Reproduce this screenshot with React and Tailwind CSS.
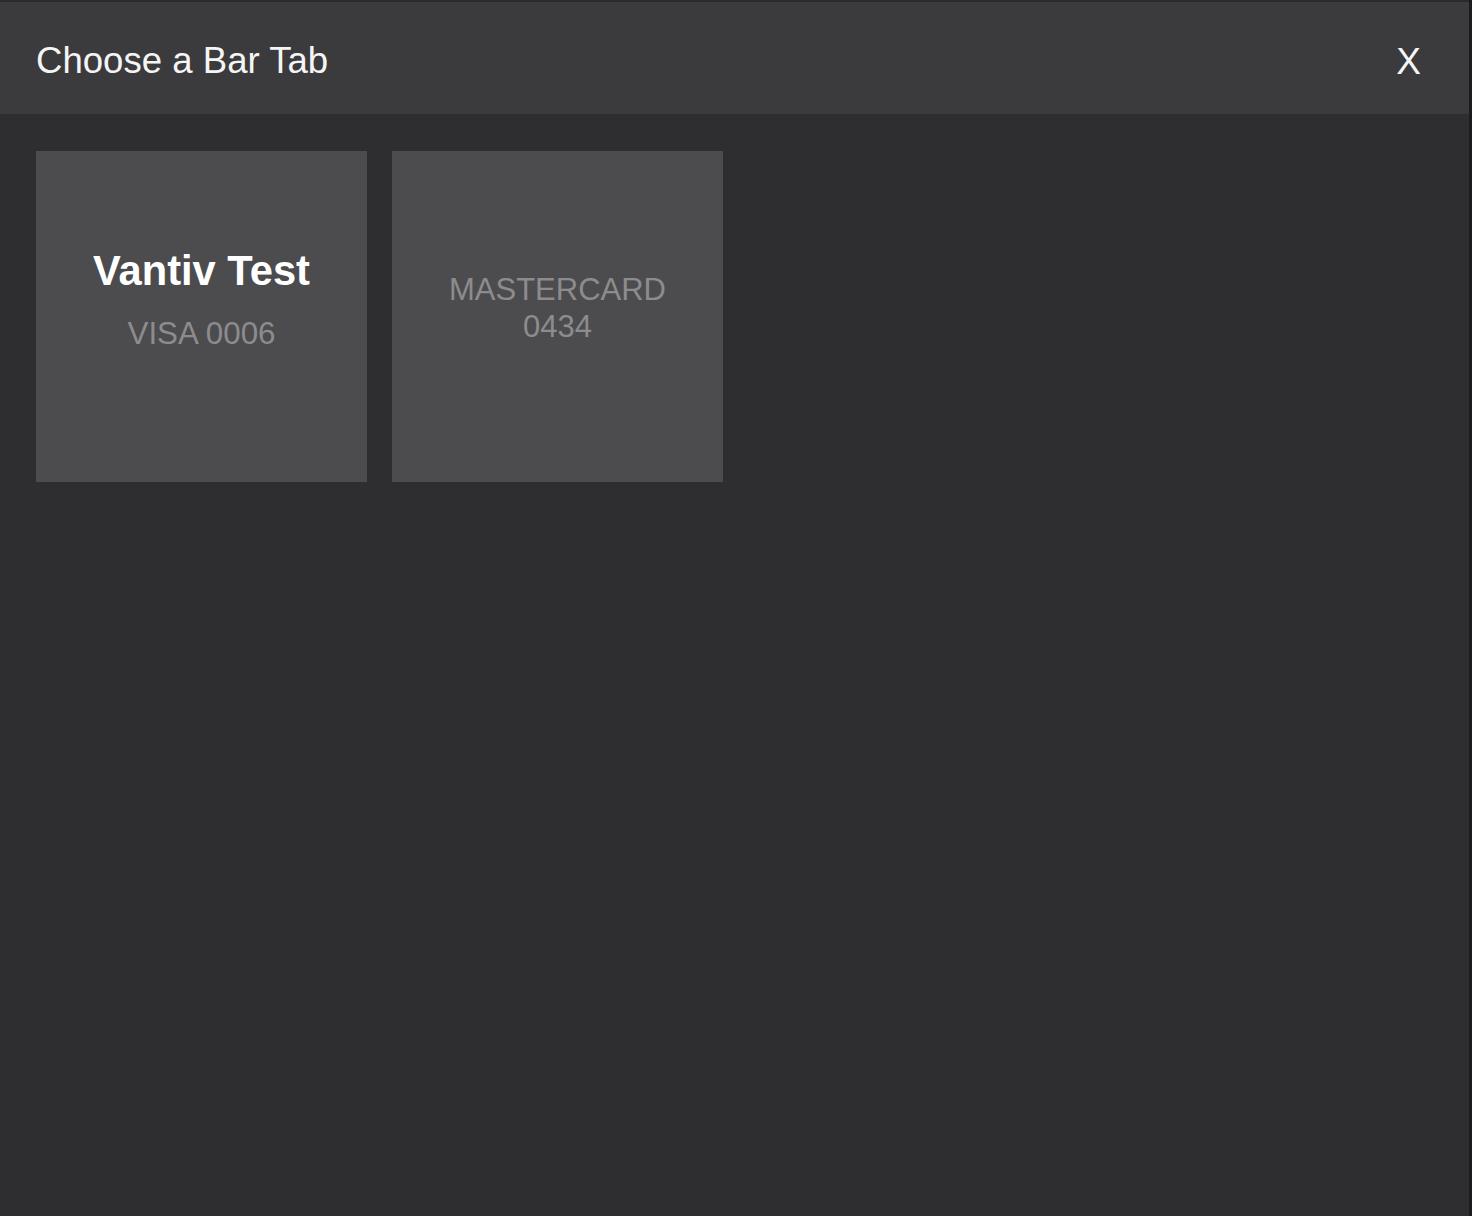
export default function App() {
  const font = { fontFamily: '"Liberation Sans", Arial, Helvetica, sans-serif' };
  return (
    <div className="w-[1472px] h-[1216px] flex bg-[#1c1b20]" style={font}>
      <div className="flex-1 flex flex-col bg-[#2e2d30]">
        <div className="h-[2px] bg-[#2a292c]" />
        <div className="h-[112px] bg-[#3b3a3d] flex items-center justify-between pl-[36px] pr-[48px]">
          <h1 className="text-[36.6px] leading-none text-[#f5f5f5] pt-[7px]">Choose a Bar Tab</h1>
          <button className="text-[37px] leading-none text-[#f5f5f5] pt-[7px]">X</button>
        </div>
        <div className="flex gap-[25px] pl-[36px] pt-[37px]">
          <div className="w-[331px] h-[331px] bg-[#4c4b4e] flex flex-col items-center pt-[97px]">
            <div className="text-[41.7px] leading-[46px] font-bold text-white">Vantiv Test</div>
            <div className="text-[31.3px] leading-[37px] text-[#8c8b8e] mt-[21px]">VISA 0006</div>
          </div>
          <div className="w-[331px] h-[331px] bg-[#4c4b4e] flex flex-col items-center pt-[120px]">
            <div className="text-[31px] leading-[37px] text-[#8c8b8e]">MASTERCARD</div>
            <div className="text-[31px] leading-[37px] text-[#8c8b8e]">0434</div>
          </div>
        </div>
      </div>
      <div className="w-[3px] bg-[#1c1b22]" />
    </div>
  );
}
